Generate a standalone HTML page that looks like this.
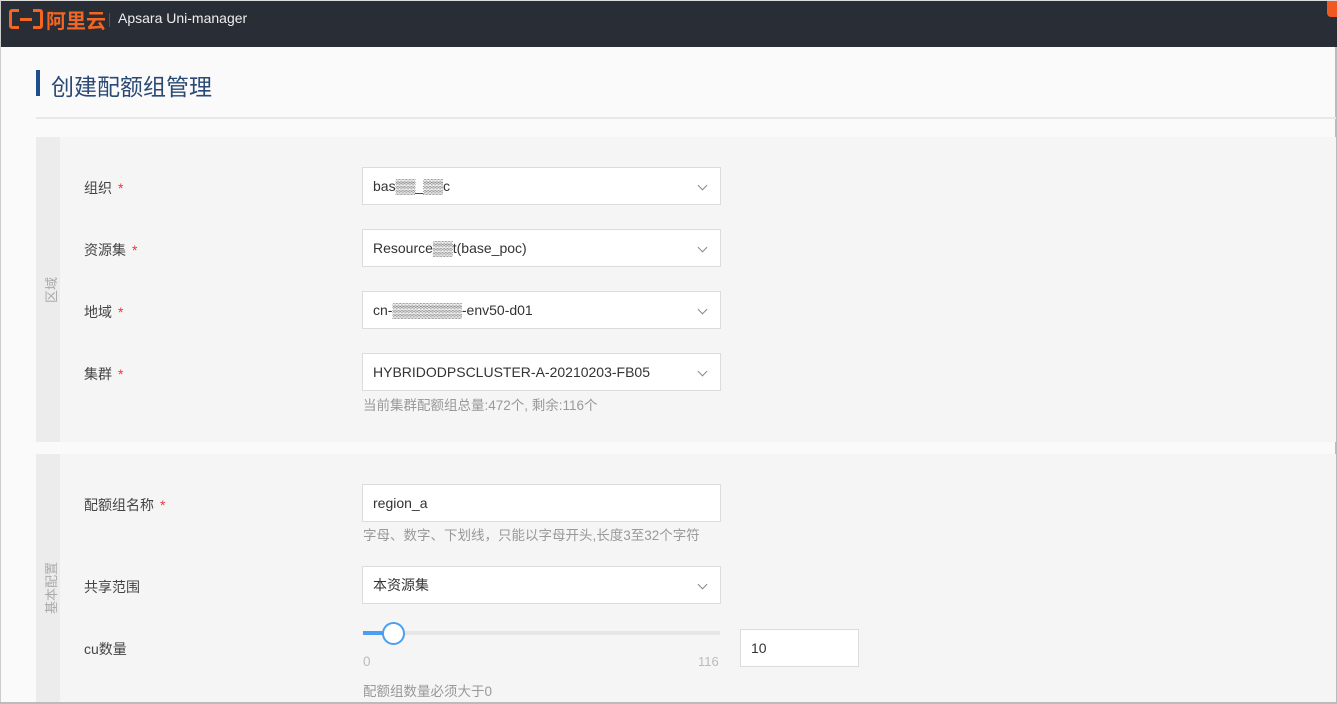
<!DOCTYPE html>
<html><head><meta charset="utf-8"><style>
*{margin:0;padding:0;box-sizing:border-box}
body{width:1337px;height:704px;overflow:hidden;background:#fafafa;font-family:"Liberation Sans","Noto Sans CJK SC",sans-serif;position:relative;color:#333}
.hdr{position:absolute;left:0;top:0;width:1337px;height:47px;background:#292d35;border-top:1px solid #ddd;border-left:1px solid #ccc}
.abs{position:absolute}
.sec{position:absolute;left:36px;width:1300px;background:#f5f5f5}
.side{position:absolute;left:0;top:0;width:24px;height:100%;background:#ececec}
.lbl{position:absolute;left:84px;font-size:14px;color:#444}
.lbl b{color:#e4393c;font-weight:normal;margin-left:6px}
.inp{position:absolute;left:362px;width:359px;height:38px;background:#fff;border:1px solid #dcdcdc;font-size:14px;color:#333;padding:0 10px;line-height:36px}
.inp .ar{position:absolute;right:14px;top:14px;width:7px;height:7px;border-right:1px solid #888;border-bottom:1px solid #888;transform:rotate(45deg)}
.hint{position:absolute;left:363px;font-size:13.5px;color:#999}
.vt{position:absolute;left:5px;font-size:13px;color:#aaa;writing-mode:vertical-rl;text-orientation:sideways;transform:rotate(180deg)}
</style></head><body>
<div class="hdr">
<div class="abs" style="left:8px;top:8px;width:34px;height:20px;border:3px solid #f26522;border-radius:3px"></div>
<div class="abs" style="left:18px;top:7px;width:14px;height:24px;background:#292d35"></div>
<div class="abs" style="left:19px;top:17px;width:12px;height:3px;background:#f26522"></div>
<div class="abs" style="left:45px;top:4px;font-size:20px;font-weight:bold;color:#f26522">阿里云</div>
<div class="abs" style="left:108px;top:12px;width:1px;height:14px;background:#555"></div>
<div class="abs" style="left:117px;top:9px;font-size:14px;color:#eee">Apsara Uni-manager</div>
<div class="abs" style="left:1326px;top:0;width:10px;height:16px;background:#f05a22;border-radius:0 0 0 4px"></div>
</div>
<div class="abs" style="left:1335px;top:47px;width:2px;height:657px;background:#bbb"></div>
<div class="abs" style="left:0;top:47px;width:1px;height:657px;background:#ccc"></div>
<div class="abs" style="left:36px;top:70px;width:4px;height:26px;background:#1f4e8c"></div>
<div class="abs" style="left:51px;top:68px;font-size:23px;color:#2a4a75">创建配额组管理</div>
<div class="abs" style="left:36px;top:117px;width:1300px;height:2px;background:#e8e8e8"></div>

<div class="sec" style="top:137px;height:305px"><div class="side"></div><div class="vt" style="top:140px">区域</div></div>
<div class="sec" style="top:454px;height:250px"><div class="side"></div><div class="vt" style="top:108px">基本配置</div></div>

<div class="lbl" style="top:178px">组织<b>*</b></div>
<div class="inp" style="top:167px">bas▒▒_▒▒c<span class="ar"></span></div>
<div class="lbl" style="top:240px">资源集<b>*</b></div>
<div class="inp" style="top:229px">Resource▒▒t(base_poc)<span class="ar"></span></div>
<div class="lbl" style="top:302px">地域<b>*</b></div>
<div class="inp" style="top:291px">cn-▒▒▒▒▒▒▒-env50-d01<span class="ar"></span></div>
<div class="lbl" style="top:364px">集群<b>*</b></div>
<div class="inp" style="top:353px">HYBRIDODPSCLUSTER-A-20210203-FB05<span class="ar"></span></div>
<div class="hint" style="top:394px">当前集群配额组总量:472个, 剩余:116个</div>

<div class="lbl" style="top:495px">配额组名称<b>*</b></div>
<div class="inp" style="top:484px">region_a</div>
<div class="hint" style="top:524px">字母、数字、下划线，只能以字母开头,长度3至32个字符</div>
<div class="lbl" style="top:577px">共享范围</div>
<div class="inp" style="top:566px">本资源集<span class="ar"></span></div>
<div class="lbl" style="top:639px">cu数量</div>
<div class="abs" style="left:363px;top:631px;width:357px;height:4px;background:#e6e6e6"></div>
<div class="abs" style="left:363px;top:631px;width:30px;height:4px;background:#4a9ff0"></div>
<div class="abs" style="left:382px;top:622px;width:23px;height:23px;border:2px solid #4a9ff0;border-radius:50%;background:#fff"></div>
<div class="hint" style="top:654px;color:#bbb">0</div>
<div class="abs" style="left:698px;top:654px;font-size:13px;color:#bbb">116</div>
<div class="inp" style="top:629px;left:740px;width:119px">10</div>
<div class="hint" style="top:680px">配额组数量必须大于0</div>
<div class="abs" style="left:0;top:702px;width:1337px;height:2px;background:#bbb"></div>
</body></html>
